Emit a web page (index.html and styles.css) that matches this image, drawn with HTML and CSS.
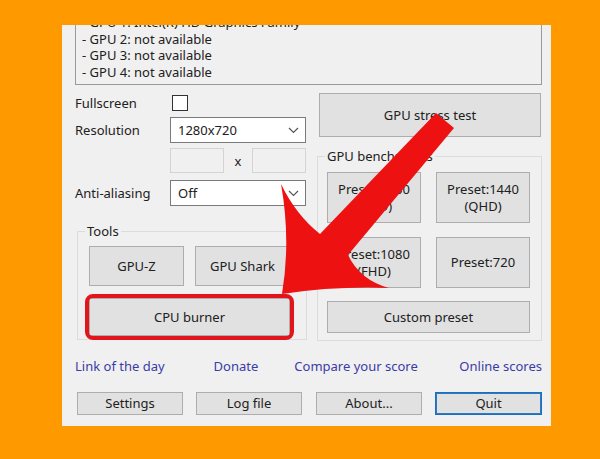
FILE: index.html
```html
<!DOCTYPE html>
<html lang="en">
<head>
    <meta charset="UTF-8">
    <meta name="viewport" content="width=device-width, initial-scale=1.0">
    <title>GpuTest</title>
    <link rel="stylesheet" href="styles.css">
</head>
<body>
    <div class="window">
        <div class="info">
            <div>- GPU 1: Intel(R) HD Graphics Family</div>
            <div>- GPU 2: not available</div>
            <div>- GPU 3: not available</div>
            <div>- GPU 4: not available</div>
        </div>

        <div class="main">
            <div class="left">
                <div class="row row-check">
                    <label class="lbl">Fullscreen</label>
                    <span class="checkbox"></span>
                </div>
                <div class="row row-res">
                    <label class="lbl">Resolution</label>
                    <div class="combo">
                        <span>1280x720</span>
                        <svg class="chevron" width="11" height="7" viewBox="0 0 11 7"><polyline points="1,1 5.5,5.5 10,1" /></svg>
                    </div>
                </div>
                <div class="row row-size">
                    <span class="lbl"></span>
                    <div class="field"></div>
                    <span class="times">x</span>
                    <div class="field"></div>
                </div>
                <div class="row row-aa">
                    <label class="lbl">Anti-aliasing</label>
                    <div class="combo">
                        <span>Off</span>
                        <svg class="chevron" width="11" height="7" viewBox="0 0 11 7"><polyline points="1,1 5.5,5.5 10,1" /></svg>
                    </div>
                </div>

                <fieldset class="group tools">
                    <legend>Tools</legend>
                    <div class="tool-grid">
                        <button class="btn">GPU-Z</button>
                        <button class="btn">GPU Shark</button>
                        <button class="btn wide marked">CPU burner</button>
                    </div>
                </fieldset>
            </div>

            <div class="right">
                <button class="btn stress">GPU stress test</button>
                <fieldset class="group bench">
                    <legend>GPU benchmarks</legend>
                    <div class="bench-grid">
                        <button class="btn">Preset:2160<br>(UHD)</button>
                        <button class="btn">Preset:1440<br>(QHD)</button>
                        <button class="btn">Preset:1080<br>(FHD)</button>
                        <button class="btn">Preset:720</button>
                        <button class="btn wide custom">Custom preset</button>
                    </div>
                </fieldset>
            </div>
        </div>

        <div class="links">
            <a href="#" class="link-day">Link of the day</a>
            <a href="#" class="link-donate">Donate</a>
            <a href="#" class="link-compare">Compare your score</a>
            <a href="#" class="link-online">Online scores</a>
        </div>

        <div class="actions">
            <button class="btn">Settings</button>
            <button class="btn">Log file</button>
            <button class="btn">About...</button>
            <button class="btn default">Quit</button>
        </div>

        <!-- big red pointer drawn over the dialog -->
        <svg class="pointer" width="489" height="401" viewBox="62 25 489 401">
            <path d="M436,113 L454,128 L348,255 Q360,280 389,288 Q335,286 282,294 Q291,240 281,184 Q296,215 320,234 Z" />
        </svg>
    </div>
</body>
</html>
```

FILE: styles.css
```css
body {
    margin: 0;
    background-color: #ff9900;
    font-family: 'Noto Sans', 'Open Sans', sans-serif;
    font-size: 13px;
    color: #202020;
}

.window {
    position: relative;
    box-sizing: border-box;
    width: 489px;
    height: 401px;
    margin: 25px 0 0 62px;
    padding: 0 9px 0 13px;
    background-color: #f0f0f0;
    overflow: hidden;
}

.info {
    margin-top: -14px;
    padding: 2px 6px 4px;
    border: 1px solid #9a9a9a;
    line-height: 16.5px;
}

.main {
    display: grid;
    grid-template-columns: 232px 225px;
    column-gap: 10px;
    margin-top: 8px;
}

/* left column: display options */

.row {
    display: flex;
    align-items: center;
}

.lbl {
    width: 95px;
    flex: none;
}

.row-check {
    height: 20px;
}

.checkbox {
    width: 14px;
    height: 14px;
    margin-left: 2px;
    border: 1px solid #333;
    background-color: white;
}

.row-res {
    height: 26px;
    margin-top: 4px;
}

.row-size {
    height: 25px;
    margin-top: 5px;
}

.row-aa {
    height: 26px;
    margin-top: 7px;
}

.combo {
    box-sizing: border-box;
    width: 136px;
    height: 26px;
    display: flex;
    align-items: center;
    justify-content: space-between;
    padding: 0 6px 0 7px;
    border: 1px solid #7a7a7a;
    background-color: white;
}

.chevron polyline {
    fill: none;
    stroke: #555;
    stroke-width: 1.2;
}

.field {
    box-sizing: border-box;
    width: 54px;
    height: 25px;
    border: 1px solid #d4d4d4;
    background-color: #f0f0f0;
}

.times {
    width: 28px;
    text-align: center;
}

/* group boxes */

.group {
    margin: 0;
    min-width: 0;
    border: 1px solid #dcdcdc;
}

    .group legend {
        padding: 0 2px;
        line-height: 18px;
    }

.tools {
    margin: 16px 0 0 2px;
    padding: 6px 0 3px 11px;
}

    .tools legend {
        margin-left: -4px;
    }

.tool-grid {
    display: grid;
    grid-template-columns: 95px 95px;
    grid-template-rows: 40px 38px;
    column-gap: 11px;
    row-gap: 12px;
}

.bench {
    margin-top: 10px;
    padding: 7px 0 7px 9px;
}

    .bench legend {
        margin-left: -2px;
    }

.bench-grid {
    display: grid;
    grid-template-columns: 94px 94px;
    grid-template-rows: 51px 51px 31px;
    column-gap: 15px;
    row-gap: 14px;
}

    .bench-grid .custom {
        margin-top: -1px;
    }

.wide {
    grid-column: 1 / 3;
}

/* buttons */

.btn {
    box-sizing: border-box;
    margin: 0;
    padding: 0;
    border: 1px solid #adadad;
    background-color: #e1e1e1;
    font-family: inherit;
    font-size: 13px;
    line-height: 17px;
    color: #202020;
}

.stress {
    width: 222px;
    height: 44px;
    margin-left: 2px;
}

.marked {
    position: relative;
}

    .marked::after {
        content: '';
        position: absolute;
        inset: -5px;
        border: 4px solid #e3141c;
        border-radius: 8px;
    }

/* links and bottom buttons */

.links {
    display: flex;
    height: 18px;
    margin-top: 16px;
    line-height: 18px;
}

    .links a {
        color: #3b3ba6;
        text-decoration: none;
    }

.link-donate {
    margin-left: 49px;
}

.link-compare {
    margin-left: 36px;
}

.link-online {
    margin-left: auto;
}

.actions {
    display: flex;
    gap: 13px;
    margin-top: 17px;
    padding-left: 2px;
}

    .actions .btn {
        width: 106px;
        height: 23px;
    }

        .actions .btn:nth-child(2) {
            margin-right: 1px;
        }

    .actions .default {
        width: 107px;
        border: 1px solid #1f6fb8;
        box-shadow: inset 0 0 0 1px #2b7bc4;
    }

.pointer {
    position: absolute;
    left: 0;
    top: 0;
    pointer-events: none;
}

    .pointer path {
        fill: #ee1111;
    }
```
